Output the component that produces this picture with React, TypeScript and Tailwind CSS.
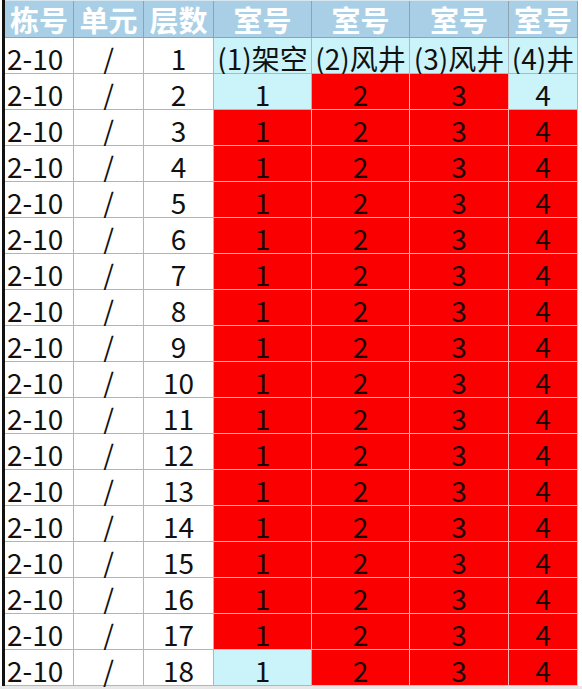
import React from "react";

type Kind = "w" | "c" | "r";

const headers = ["栋号", "单元", "层数", "室号", "室号", "室号", "室号"];
const colW = ["w-[69px]", "w-[70px]", "w-[70px]", "w-[98px]", "w-[98px]", "w-[99px]", "w-[69px]"];

function Cell({ kind, text, idx, align }: { kind: Kind; text: string; idx: number; align?: "left" | "center" }) {
  const bg =
    kind === "r"
      ? "bg-[#fb0000] border-[#f3b9b9] text-[#1a0505]"
      : kind === "c"
      ? "bg-[#caf4fa] border-[#a9b9bf] text-[#111]"
      : "bg-white border-[#b4b4b4] text-[#111]";
  return (
    <div
      className={`${colW[idx]} h-full shrink-0 border-r border-b ${bg} flex items-center ${
        align === "left" ? "justify-start pl-[2px]" : "justify-center"
      } pt-[4px] text-[28px] leading-none whitespace-nowrap`}
    >
      {text}
    </div>
  );
}

export default function App() {
  const rows: { cells: { kind: Kind; text: string }[] }[] = [];
  rows.push({
    cells: [
      { kind: "w", text: "2-10" },
      { kind: "w", text: "/" },
      { kind: "w", text: "1" },
      { kind: "c", text: "(1)架空" },
      { kind: "c", text: "(2)风井" },
      { kind: "c", text: "(3)风井" },
      { kind: "c", text: "(4)井" },
    ],
  });
  for (let f = 2; f <= 18; f++) {
    const edge = f === 2 || f === 18;
    rows.push({
      cells: [
        { kind: "w", text: "2-10" },
        { kind: "w", text: "/" },
        { kind: "w", text: String(f) },
        { kind: edge ? "c" : "r", text: "1" },
        { kind: "r", text: "2" },
        { kind: "r", text: "3" },
        { kind: f === 2 ? "c" : "r", text: "4" },
      ],
    });
  }

  return (
    <div
      className="w-[582px] h-[690px] bg-white overflow-hidden"
      style={{ fontFamily: '"Noto Sans CJK SC", "Noto Sans", sans-serif' }}
    >
      <div className="ml-[2px] w-[576px] border-l-[3px] border-[#111]">
        <div className="flex h-[38px] border-t border-[#d6e6f0]">
          {headers.map((h, i) => (
            <div
              key={i}
              className={`${colW[i]} shrink-0 h-full bg-[#a9cfe6] border-r border-b border-[#8fa3ae] flex items-center justify-center text-white font-bold text-[29px] leading-none whitespace-nowrap`}
            >
              {h}
            </div>
          ))}
        </div>
        {rows.map((r, ri) => (
          <div key={ri} className="flex h-[36px]">
            {r.cells.map((c, ci) => (
              <Cell key={ci} kind={c.kind} text={c.text} idx={ci} align={ci === 0 ? "left" : "center"} />
            ))}
          </div>
        ))}
      </div>
      <div className="h-[3px] bg-[#e8e8e8]" />
    </div>
  );
}
